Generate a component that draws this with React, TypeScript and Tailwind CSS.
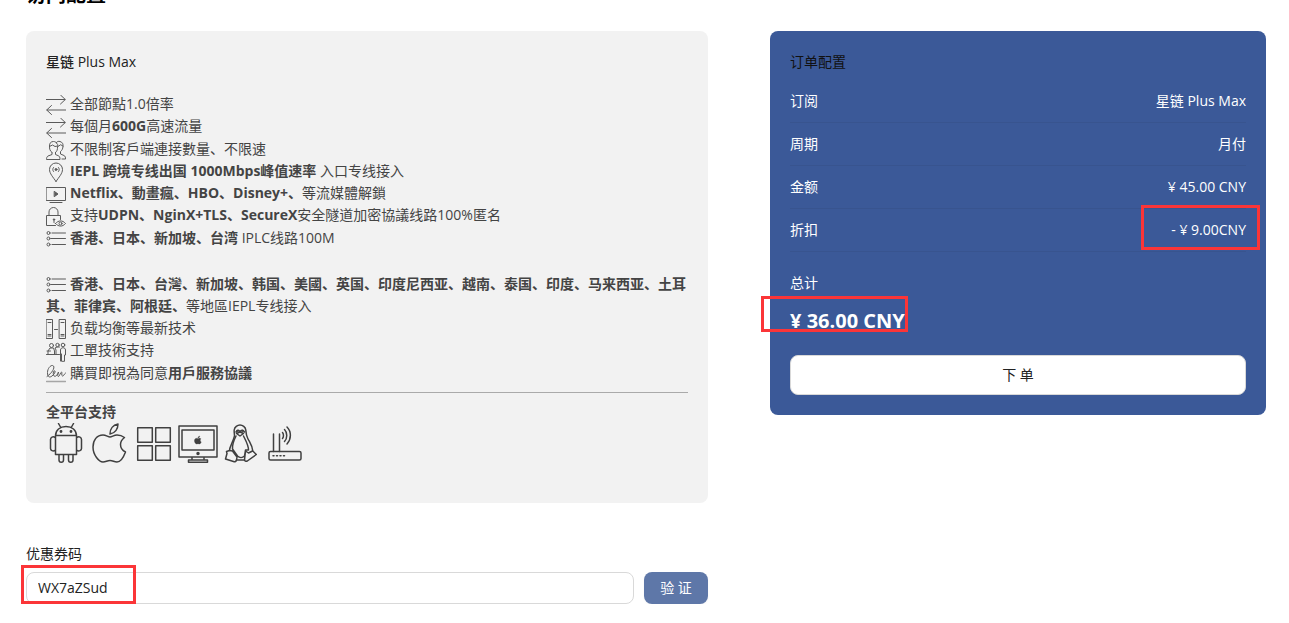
import type { ReactNode } from 'react';

const Svg = ({ box = '0 0 20 20', className = 'mr-1 h-5 w-5 text-[#5a5a5a]', w = 1, children }: { box?: string; className?: string; w?: number; children: ReactNode }) => (
  <svg viewBox={box} aria-hidden="true" className={'inline-block shrink-0 align-middle ' + className} fill="none" stroke="currentColor" strokeWidth={w} strokeLinecap="round" strokeLinejoin="round">
    {children}
  </svg>
);

const Arrows = () => <Svg><path d="M0 4.500h19M14.500 0l4.800 4.500-4.800 4.500M20 15H1M5.500 10.500L.7 15l4.800 4.500" /></Svg>;
const People = () => (
  <Svg>
    <path d="M6 12.500v2l-4 1.500C.8 16.800.5 18 .5 19.500h13.500c0-2-.4-3.200-1.500-3.700l-3-1.300v-2M6 12.500C4 11 3.300 9 3.500 6M9.500 12.500c1.500-1 2.200-3 2-5.500M3.500 6C3.300 3 5 1.500 7.500 1.500c1.200 0 2 .4 2.700 1.200M3.500 6.500l3-1.500 2.500 1.500L11.500 6M10.200 2.700C11 1.500 12.500 1 14 1.500c2.500.7 3.300 2.500 3 5-.2 2.200-1 4-2.500 5v2.500l3.500 1.500c1.200.6 1.600 2 1.600 3.500H16M10.200 2.700c1.500 1 1.800 2.300 1.500 4l3-2 2.300 1.500" />
  </Svg>
);
const Pin = () => <Svg><path d="M10 19.500C7 15 3.500 11.500 3.500 7.500a6.500 6.500 0 0 1 13 0c0 4-3.500 7.500-6.500 12zM7.500 5.500c-1 1.200-1 2.800 0 4M12.500 5.500c1 1.200 1 2.800 0 4" /><circle cx="10" cy="7.500" r="1" fill="currentColor" /></Svg>;
const Video = () => <Svg><path d="M.5 3.500h19v13H.5zM4 18.500h12" /><path d="M8.500 7.500l3.500 2.500-3.500 2.500z" fill="currentColor" /></Svg>;
const Lock = () => <Svg><path d="M9.500 18.500h-9v-10h14v4M3 8.500V5a4.500 4.500 0 0 1 9 0v3.500M8 13v2.500M9.500 16.500c3-3.500 7-3.500 10 0-3 3.500-7 3.500-10 0z" /><circle cx="8" cy="12.500" r=".7" fill="currentColor" /><circle cx="14.500" cy="16.500" r="1.500" /></Svg>;
const ListIcon = () => <Svg><circle cx="2.500" cy="4" r="1.500" /><circle cx="2.500" cy="9.500" r="1.500" /><circle cx="2.500" cy="15.500" r="1.500" /><path d="M6 4h13.500M5 9.500h14.500M6 15.500h13.500" /></Svg>;
const Servers = () => <Svg><path d="M.5.5h6v19h-6zM13.500.5h6v19h-6zM2 3.500h3M15 3.500h3M8.500 10.500h3M2 15.500h3M15 15.500h3M2 17h3M15 17h3" /></Svg>;
const Support = () => <Svg><circle cx="5.500" cy="3.500" r="2" /><circle cx="11.500" cy="3" r="1.700" /><circle cx="17" cy="3" r="1.800" /><path d="M.5 12.500h13M2 12V9l2-3h3.500l1 3v3M1 9h3.500M10 12V8l-1-2 2-1h2.500M14.500 19V8c0-3 5-3 5 0v5h-1v6.300h-3V12" /></Svg>;
const Signature = () => <Svg><path d="M1 12.500C6 9 9 4 7.500 2 5.500 0 1.500 4 1.500 8.500s2 5.500 4.500 3.500 3.500-4 3-5-2.500 1-1.500 4 4 .5 5-3c-1 3-1 4.500 0 4.500s2-4.500 3-4.500-.5 4 1 4 1.500-2 3-3" /><path d="M.5 17.500h19" strokeOpacity=".5" strokeWidth="1.500" /></Svg>;

const features: [() => ReactNode, ReactNode][] = [
  [Arrows, '全部節點1.0倍率'],
  [Arrows, <>每個月<b>600G</b>高速流量</>],
  [People, '不限制客戶端連接數量、不限速'],
  [Pin, <><b>IEPL 跨境专线出国 1000Mbps峰值速率</b> 入口专线接入</>],
  [Video, <><b>Netflix、動畫瘋、HBO、Disney+、</b>等流媒體解鎖</>],
  [Lock, <>支持<b>UDPN、NginX+TLS、SecureX</b>安全隧道加密協議线路100%匿名</>],
  [ListIcon, <><b>香港、日本、新加坡、台湾</b> IPLC线路100M</>],
];
const more: [() => ReactNode, ReactNode][] = [
  [ListIcon, <><b>香港、日本、台灣、新加坡、韩国、美國、英国、印度尼西亚、越南、泰国、印度、马来西亚、土耳其、菲律宾、阿根廷、</b>等地區IEPL专线接入</>],
  [Servers, '负载均衡等最新技术'],
  [Support, '工單技術支持'],
  [Signature, <>購買即視為同意<b>用戶服務協議</b></>],
];

const FeatureList = ({ items }: { items: [() => ReactNode, ReactNode][] }) => (
  <ul>
    {items.map(([Icon, text], i) => (
      <li key={i}><Icon />{text}</li>
    ))}
  </ul>
);

const applePath = 'M27 12c-3 0-5 2-7 2s-4-2-7-2C7 12 3 17 3 24c0 8 6 15 10 15 3 0 4-1.500 7-1.500s4 1.500 7 1.500c4 0 7-6 8.500-10-3-1.500-5-4-5-7.500s2-5.500 4-7C32.500 13 30 12 27 12zM20 11c0-5 3-9 8-10 0 5-3 9-8 10z';

const Platforms = () => (
  <div className="flex gap-1 text-[#404040]">
    <Svg box="0 0 40 40" className="h-10 w-10" w={1.5}>
      <path d="M9.500 13c0-6 4.500-9.500 10.500-9.500s10.500 3.500 10.500 9.500v18.500h-21zM9.500 12.500h21M14.500 4l-2-3.500M25.500 4l2-3.500M9 14.500c-2-1.500-4.500 0-4.500 2v9c0 2 2.500 3 4.500 2M31 14.500c2-1.500 4.500 0 4.500 2v9c0 2-2.500 3-4.500 2M13 32v5c0 3 4.500 3 4.500 0v-5M22.500 32v5c0 3 4.500 3 4.500 0v-5" />
      <circle cx="15" cy="8.500" r=".7" fill="currentColor" /><circle cx="25" cy="8.500" r=".7" fill="currentColor" />
    </Svg>
    <Svg box="0 0 40 40" className="h-10 w-10" w={1.5}><path d={applePath} /></Svg>
    <Svg box="0 0 40 40" className="h-10 w-10" w={1.5}><path d="M3.700 4.700h14.600v14.600H3.700zM21.700 4.700h14.600v14.600H21.700zM3.700 22.700h14.600v14.600H3.700zM21.700 22.700h14.600v14.600H21.700z" /></Svg>
    <Svg box="0 0 40 40" className="h-10 w-10" w={1.5}>
      <path d="M1 3h38v31H1zM4 7h32v20H4zM14 34v3M26 34v3M10.500 37h19v2.200h-19z" />
      <circle cx="20" cy="30.500" r="1" fill="currentColor" />
      <path d={applePath} transform="translate(15.800 12.800) scale(.21)" fill="currentColor" />
    </Svg>
    <Svg box="0 0 40 40" className="h-10 w-10" w={1.5}>
      <path d="M12.500 13c0-2-.5-4-.3-6C12.500 4 15.500 2 18 2s5.500 2 5.800 5c.2 3 .2 5 2 8.500 2 4 4.500 7 5 12.500l3.500 3.500-9 6.500c-1.500.7-2.500 0-2.800-1h-8c-.3 1.500-1.500 2-3 1.500l-8-2.500L5 30.500l-.5-2 3-1c0-4 3.500-8 5-14.500z" />
      <path d="M14 13c-2 4-4 8-3.500 13l5 7c2 2 5 2 7 0l1-6h3c0-5-3-10-5-14M7.500 27.500l3 .5 4.500 6-.5 3M22.500 37l1-9 3 2 4-2M14 9c1.500-2.500 3-2 4 0 1-2 3-2.500 4.500 0M14.500 10.500l3.500-1.500 3.500 1.500-3.500 2.500z" />
      <circle cx="15.500" cy="8" r=".5" /><circle cx="20.500" cy="8" r=".5" />
    </Svg>
    <Svg box="0 0 40 40" className="h-10 w-10" w={1.5}>
      <rect x="3" y="28.500" width="32" height="8.500" rx="1.500" />
      <path d="M7.500 28.500V11M13.500 28.500V11" /><path d="M7 32.800h14" strokeDasharray="1 2.500" />
      <path d="M16.500 9.500c1.300 1.500 1.300 4.500 0 6M18.500 6.500c3 3 3 9 0 12M21 4c4.500 4.500 4.500 12 0 17" />
    </Svg>
  </div>
);

const Mark = ({ className }: { className: string }) => (
  <span aria-hidden="true" className={'pointer-events-none absolute border-3 border-[#fb3538] ' + className} />
);

const rows = [
  ['订阅', '星链 Plus Max'],
  ['周期', '月付'],
  ['金额', '¥ 45.00 CNY'],
  ['折扣', '- ¥ 9.00CNY'],
];

export default function App() {
  return (
    <div className="overflow-hidden bg-white pr-[23px] pl-[26px] font-['Open_Sans','Noto_Sans_CJK_SC',sans-serif] text-sm text-[#222]">
      <header className="-mt-5 mb-[21px] flex h-[30px] items-center">
        <h1 className="text-xl font-bold text-black">访问配置</h1>
      </header>
      <div className="grid grid-cols-[682fr_496fr] items-start gap-[62px]">
        <main>
          <section className="rounded-lg bg-[#f2f2f2] px-5 pt-5 pb-10">
            <h2 className="leading-[22px] font-medium">星链 Plus Max</h2>
            <div className="mt-5 text-[#444] leading-[22px]">
              <FeatureList items={features} />
              <div className="mt-6"><FeatureList items={more} /></div>
              <hr className="my-2 border-[#aaa]" />
              <h3 className="font-bold">全平台支持</h3>
              <Platforms />
            </div>
          </section>
          <form className="mt-10" onSubmit={(e) => e.preventDefault()}>
            <label htmlFor="coupon" className="block leading-[22px]">优惠券码</label>
            <div className="relative mt-[7px] flex gap-[10px]">
              <input id="coupon" defaultValue="WX7aZSud" className="h-8 min-w-0 flex-1 rounded-lg border border-[#d9d9d9] bg-white px-[11px] outline-none" />
              <button type="submit" className="h-8 w-16 rounded-lg bg-[#5e77a8] text-white shadow-xs">验 证</button>
              <Mark className="-top-[7px] -left-[5px] h-[39px] w-[115px]" />
            </div>
          </form>
        </main>
        <aside className="rounded-lg bg-[#3b5998] p-5 text-white">
          <h2 className="leading-[22px] text-[#111]">订单配置</h2>
          <dl className="mt-[7px]">
            {rows.map(([label, value]) => (
              <div key={label} className="relative flex h-[43px] items-center justify-between border-b border-[#38548f]">
                <dt>{label}</dt>
                <dd>{value}</dd>
                {label === '折扣' && <Mark className="-top-[4px] -right-[14px] h-[45px] w-[119px]" />}
              </div>
            ))}
          </dl>
          <p className="mt-5 leading-[22px]">总计</p>
          <p className="relative mt-3 text-xl leading-[30px] font-bold">
            ¥ 36.00 CNY
            <Mark className="-top-[10px] -left-[29px] h-[36px] w-[147px]" />
          </p>
          <button type="button" className="mt-[19px] h-10 w-full rounded-lg border border-[#d9d9d9] bg-white text-[#222]">下 单</button>
        </aside>
      </div>
    </div>
  );
}
